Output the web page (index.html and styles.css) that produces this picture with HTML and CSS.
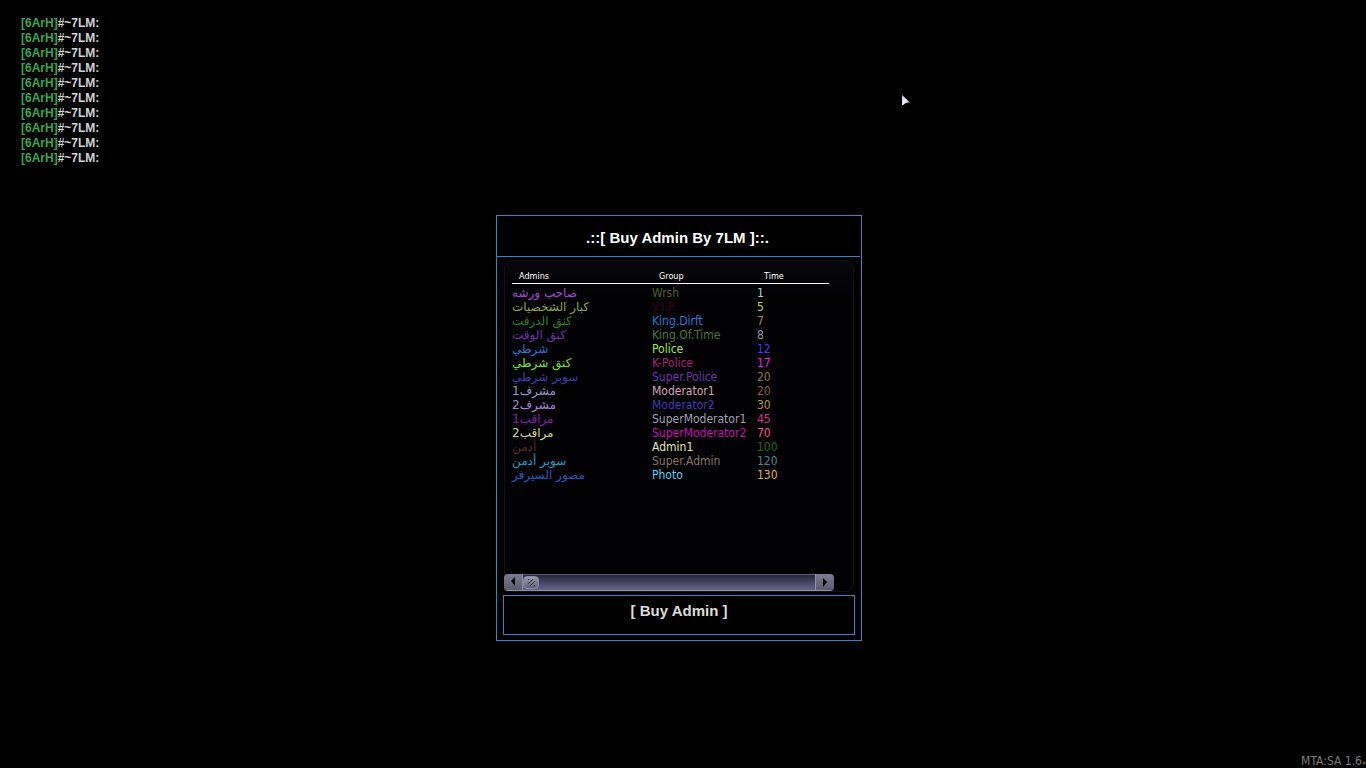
FILE: index.html
```html
<!DOCTYPE html>
<html lang="ar">
<head>
  <meta charset="UTF-8">
  <meta name="viewport" content="width=device-width, initial-scale=1.0">
  <title>Buy Admin</title>
  <link rel="stylesheet" href="styles.css">
</head>
<body>

  <ul class="chat">
    <li><span class="tag">[6ArH]</span>#~7LM:</li>
    <li><span class="tag">[6ArH]</span>#~7LM:</li>
    <li><span class="tag">[6ArH]</span>#~7LM:</li>
    <li><span class="tag">[6ArH]</span>#~7LM:</li>
    <li><span class="tag">[6ArH]</span>#~7LM:</li>
    <li><span class="tag">[6ArH]</span>#~7LM:</li>
    <li><span class="tag">[6ArH]</span>#~7LM:</li>
    <li><span class="tag">[6ArH]</span>#~7LM:</li>
    <li><span class="tag">[6ArH]</span>#~7LM:</li>
    <li><span class="tag">[6ArH]</span>#~7LM:</li>
  </ul>

  <main class="screen">
    <section class="window">
      <h1 class="title">.::[ Buy Admin By 7LM ]::.</h1>

      <div class="panel">
        <table class="grid">
          <thead>
            <tr><th class="col-admin">Admins</th><th class="col-group">Group</th><th>Time</th></tr>
          </thead>
          <tbody>
            <tr><td class="purple">صاحب ورشه</td><td class="moss">Wrsh</td><td class="mint">1</td></tr>
            <tr><td class="olive">كبار الشخصيات</td><td class="wine">V.I.P</td><td class="yellow">5</td></tr>
            <tr><td class="green">كنق الدرفت</td><td class="blue">King.Dirft</td><td class="amber">7</td></tr>
            <tr><td class="violet">كنق الوقت</td><td class="sage">King.Of.Time</td><td class="mauve">8</td></tr>
            <tr><td class="blue">شرطي</td><td class="lime">Police</td><td class="indigo">12</td></tr>
            <tr><td class="grass">كنق شرطي</td><td class="berry">K-Police</td><td class="magenta">17</td></tr>
            <tr><td class="navy">سوبر شرطي</td><td class="violet">Super.Police</td><td class="taupe">20</td></tr>
            <tr><td class="steel">مشرف1</td><td class="rose">Moderator1</td><td class="brown">20</td></tr>
            <tr><td class="lilac">مشرف2</td><td class="navy">Moderator2</td><td class="sand">30</td></tr>
            <tr><td class="plum">مراقب1</td><td class="grey">SuperModerator1</td><td class="pink">45</td></tr>
            <tr><td class="straw">مراقب2</td><td class="fuchsia">SuperModerator2</td><td class="coral">70</td></tr>
            <tr><td class="umber">أدمن</td><td class="cream">Admin1</td><td class="forest">100</td></tr>
            <tr><td class="cyan">سوبر أدمن</td><td class="taupe">Super.Admin</td><td class="teal">120</td></tr>
            <tr><td class="royal">مصور السيرفر</td><td class="sky">Photo</td><td class="gold">130</td></tr>
          </tbody>
        </table>

        <div class="scrollbar">
          <button class="arrow arrow-left" type="button" aria-label="Scroll left">
            <svg width="18" height="16" viewBox="0 0 18 16"><path d="M7 7L11 3V12Z" fill="#08080c"/></svg>
          </button>
          <input class="track" type="range" min="0" max="100" value="0" aria-label="Scroll position">
          <button class="arrow arrow-right" type="button" aria-label="Scroll right">
            <svg width="18" height="16" viewBox="0 0 18 16"><path d="M11 8L7 4V13Z" fill="#08080c"/></svg>
          </button>
        </div>
      </div>

      <button class="buy" type="button">[ Buy Admin ]</button>
    </section>
  </main>

  <footer class="version">MTA:SA 1.6<span class="star">*</span></footer>

  <svg class="cursor" width="10" height="12" viewBox="0 0 10 12">
    <defs>
      <linearGradient id="pointer" x1="0" y1="0" x2="1" y2="1">
        <stop offset="0" stop-color="#c9cbe0"/>
        <stop offset="0.5" stop-color="#eeeef6"/>
        <stop offset="1" stop-color="#77789c"/>
      </linearGradient>
    </defs>
    <path d="M0 0L8 7.500L4 8L1 10H0Z" fill="url(#pointer)"/>
  </svg>

</body>
</html>
```
FILE: styles.css
```css
* {
  box-sizing: border-box;
  margin: 0;
  padding: 0;
}
body {
  min-height: 100vh;
  display: flex;
  flex-direction: column;
  background: #000;
  color: #fff;
  font-family: "Liberation Sans", Arial, sans-serif;
}

/* chat */
.chat {
  padding: 16px 21px 0;
  list-style: none;
  font-size: 12px;
  font-weight: bold;
  line-height: 15px;
  color: #d2d2d2;
}
.tag {
  color: #32a852;
}

/* window */
.screen {
  display: flex;
  justify-content: center;
  padding: 49px 8px 0 0;
}
.window {
  width: 366px;
  border: 1px solid #2f86c8;
  padding-bottom: 5px;
}
.title {
  margin-right: 1px;
  padding: 12px 8px 8px 6px;
  border-bottom: 1px solid #2f86c8;
  font-size: 15px;
  line-height: 20px;
  text-align: center;
}
.panel {
  min-height: 332px;
  margin: 3px 7px 0;
  padding-top: 8px;
  display: flex;
  flex-direction: column;
  border: 1px solid #111119;
  border-radius: 8px;
  background: linear-gradient(#06060c, #020205 40px);
}

/* list */
.grid {
  width: 317px;
  margin-left: 7px;
  table-layout: fixed;
  border-collapse: collapse;
  font-family: "DejaVu Sans Condensed", "DejaVu Sans", Tahoma, sans-serif;
  font-size: 12px;
  line-height: 14px;
  text-align: left;
  white-space: nowrap;
}
.grid th {
  padding: 0 0 0 7px;
  border-bottom: 1px solid #fff;
  font-size: 9px;
  font-weight: normal;
}
.grid td:first-child {
  font-family: "DejaVu Sans", Tahoma, sans-serif;
}
.grid tbody::before {
  content: "";
  display: block;
  height: 2px;
}
.col-admin {
  width: 140px;
}
.col-group {
  width: 105px;
}

.purple { color: #a843d6; }
.moss { color: #525c2a; }
.mint { color: #b4dcae; }
.olive { color: #8ca832; }
.wine { color: #380418; }
.yellow { color: #c8d61e; }
.green { color: #238418; }
.blue { color: #1e7ad2; }
.amber { color: #b88a16; }
.violet { color: #6a36aa; }
.sage { color: #48743e; }
.mauve { color: #9c8ca8; }
.lime { color: #a8e83a; }
.indigo { color: #4e30fa; }
.grass { color: #74e41a; }
.berry { color: #ac2076; }
.magenta { color: #fa12ec; }
.navy { color: #4438b2; }
.taupe { color: #8a7268; }
.steel { color: #8c9cc8; }
.rose { color: #d6a6b6; }
.brown { color: #8e5c30; }
.lilac { color: #b080d8; }
.sand { color: #b0984e; }
.plum { color: #841cb4; }
.grey { color: #a0a0b0; }
.pink { color: #da2c90; }
.straw { color: #ccd888; }
.fuchsia { color: #c80eac; }
.coral { color: #fc5086; }
.umber { color: #542e1c; }
.cream { color: #e2e2be; }
.forest { color: #286218; }
.cyan { color: #1ca0c4; }
.teal { color: #4a8290; }
.royal { color: #285abe; }
.sky { color: #5cd0f0; }
.gold { color: #dcae38; }

/* horizontal scrollbar */
.scrollbar {
  width: 330px;
  height: 17px;
  margin: auto 0 0 -1px;
  display: flex;
  border-bottom: 1px solid #9292a4;
  border-radius: 4px;
  overflow: hidden;
}
.arrow {
  width: 19px;
  height: 16px;
  flex: none;
  border: 0;
  background: linear-gradient(#7c7c90, #5a5a70);
}
.arrow-left {
  border-right: 1px solid #9090a4;
}
.arrow-right {
  border-left: 1px solid #9090a4;
}
.arrow svg {
  display: block;
}
.track {
  flex: 1;
  min-width: 0;
  height: 16px;
  appearance: none;
  border-top: 1px solid #5c5c70;
  background: linear-gradient(#26263c, #64648a);
}
.track::-webkit-slider-thumb {
  appearance: none;
  width: 16px;
  height: 13px;
  border: 1px solid #8c8ca2;
  border-radius: 4px;
  background:
    repeating-linear-gradient(135deg, #34344a 0 1px, transparent 1px 3px) center / 7px 7px no-repeat,
    linear-gradient(#9a9aae, #626278);
}

.buy {
  display: block;
  width: calc(100% - 12px);
  height: 40px;
  margin: 3px 6px 0;
  padding-bottom: 10px;
  border: 1px solid #2f86c8;
  background: #000;
  color: #dcdcdc;
  font: bold 15px "Liberation Sans", Arial, sans-serif;
}

.version {
  margin-top: auto;
  font-family: "DejaVu Sans Condensed", Tahoma, sans-serif;
  font-size: 12px;
  line-height: 13px;
  text-align: right;
  color: #7c7c7c;
}
.star {
  font-size: 9px;
  vertical-align: sub;
  line-height: 1px;
}
.cursor {
  position: absolute;
  left: 902px;
  top: 95px;
}
```
